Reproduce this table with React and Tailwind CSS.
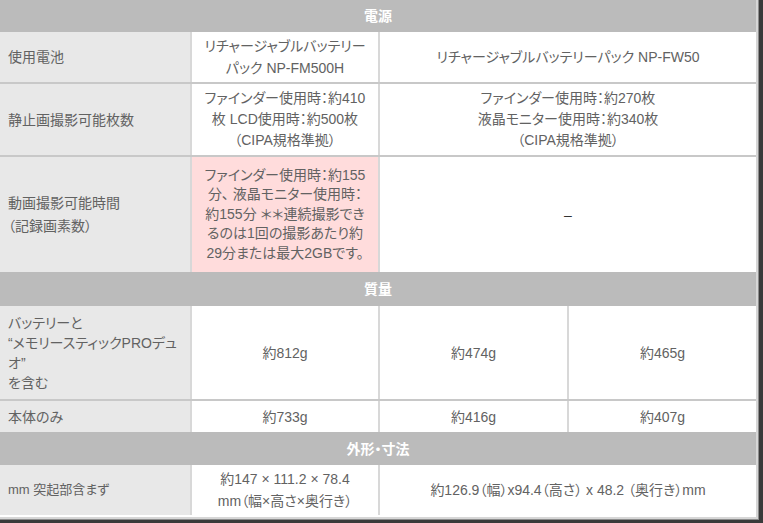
import React from 'react';

const FONT = "[font-family:'Liberation_Sans','Noto_Sans_CJK_JP',sans-serif] [font-feature-settings:'palt']";

function Header({ title, h }) {
  return (
    <div className={`flex items-center justify-center bg-[#bbbbbb] text-[14px] font-bold text-white ${h}`}>
      {title}
    </div>
  );
}

function Label({ children, className = '' }) {
  return (
    <div className={`flex items-center border-r-2 border-[#d8d8d8] bg-[#e8e8e8] pl-2 text-left ${className}`}>
      <div>{children}</div>
    </div>
  );
}

function Cell({ children, className = '' }) {
  return (
    <div className={`flex items-center justify-center text-center ${className}`}>
      <div>{children}</div>
    </div>
  );
}

export default function App() {
  return (
    <div className={`h-[523px] w-[763px] bg-[#3a3a3a] ${FONT}`}>
      <div className="w-[759px] h-[520px] border-r border-b border-[#8c8c8c]">
        <div className="w-[758px] h-[519px] border-r-2 border-b-2 border-[#d6d6d6] bg-white text-[14px] leading-[20px] text-[#626262]">
          {/* 電源 */}
          <Header title="電源" h="h-[32px]" />

          <div className="grid h-[52px] grid-cols-[192px_188px_376px] border-b-2 border-[#c8c8c8]">
            <Label>使用電池</Label>
            <Cell className="border-r-2 border-[#d8d8d8] leading-[22px]">
              リチャージャブルバッテリー<br />パック NP-FM500H
            </Cell>
            <Cell>リチャージャブルバッテリーパック NP-FW50</Cell>
          </div>

          <div className="grid h-[73px] grid-cols-[192px_188px_376px] border-b-2 border-[#c8c8c8]">
            <Label>静止画撮影可能枚数</Label>
            <Cell className="border-r-2 border-[#d8d8d8] leading-[21px]">
              ファインダー使用時：約410<br />枚 LCD使用時：約500枚<br />（CIPA規格準拠）
            </Cell>
            <Cell className="leading-[21px]">
              ファインダー使用時：約270枚<br />液晶モニター使用時：約340枚<br />（CIPA規格準拠）
            </Cell>
          </div>

          <div className="grid h-[115px] grid-cols-[192px_188px_376px]">
            <Label className="leading-[23px]">
              動画撮影可能時間<br />（記録画素数）
            </Label>
            <Cell className="border-r-2 border-[#d8d8d8] bg-[#ffdcdc] leading-[19.5px] whitespace-nowrap">
              ファインダー使用時：約155<br />分、 液晶モニター使用時：<br />約155分 ＊＊連続撮影でき<br />るのは1回の撮影あたり約<br />29分または最大2GBです。
            </Cell>
            <Cell className="text-[#333]">–</Cell>
          </div>

          {/* 質量 */}
          <Header title="質量" h="h-[34px]" />

          <div className="grid h-[95px] grid-cols-[192px_188px_189px_187px] border-b-2 border-[#c8c8c8]">
            <Label className="whitespace-nowrap">
              バッテリーと<br />“メモリースティックPROデュ<br />オ”<br />を含む
            </Label>
            <Cell className="border-r-2 border-[#d8d8d8]">約812g</Cell>
            <Cell className="border-r-2 border-[#d8d8d8]">約474g</Cell>
            <Cell>約465g</Cell>
          </div>

          <div className="grid h-[31px] grid-cols-[192px_188px_189px_187px]">
            <Label>本体のみ</Label>
            <Cell className="border-r-2 border-[#d8d8d8]">約733g</Cell>
            <Cell className="border-r-2 border-[#d8d8d8]">約416g</Cell>
            <Cell>約407g</Cell>
          </div>

          {/* 外形・寸法 */}
          <Header title="外形・寸法" h="h-[33px]" />

          <div className="grid h-[50px] grid-cols-[192px_188px_376px]">
            <Label className="text-[13px]">mm 突起部含まず</Label>
            <Cell className="border-r-2 border-[#d8d8d8] leading-[22px]">
              約147 × 111.2 × 78.4<br />mm（幅×高さ×奥行き）
            </Cell>
            <Cell>約126.9（幅）x94.4（高さ） x 48.2 （奥行き）mm</Cell>
          </div>
        </div>
      </div>
    </div>
  );
}
